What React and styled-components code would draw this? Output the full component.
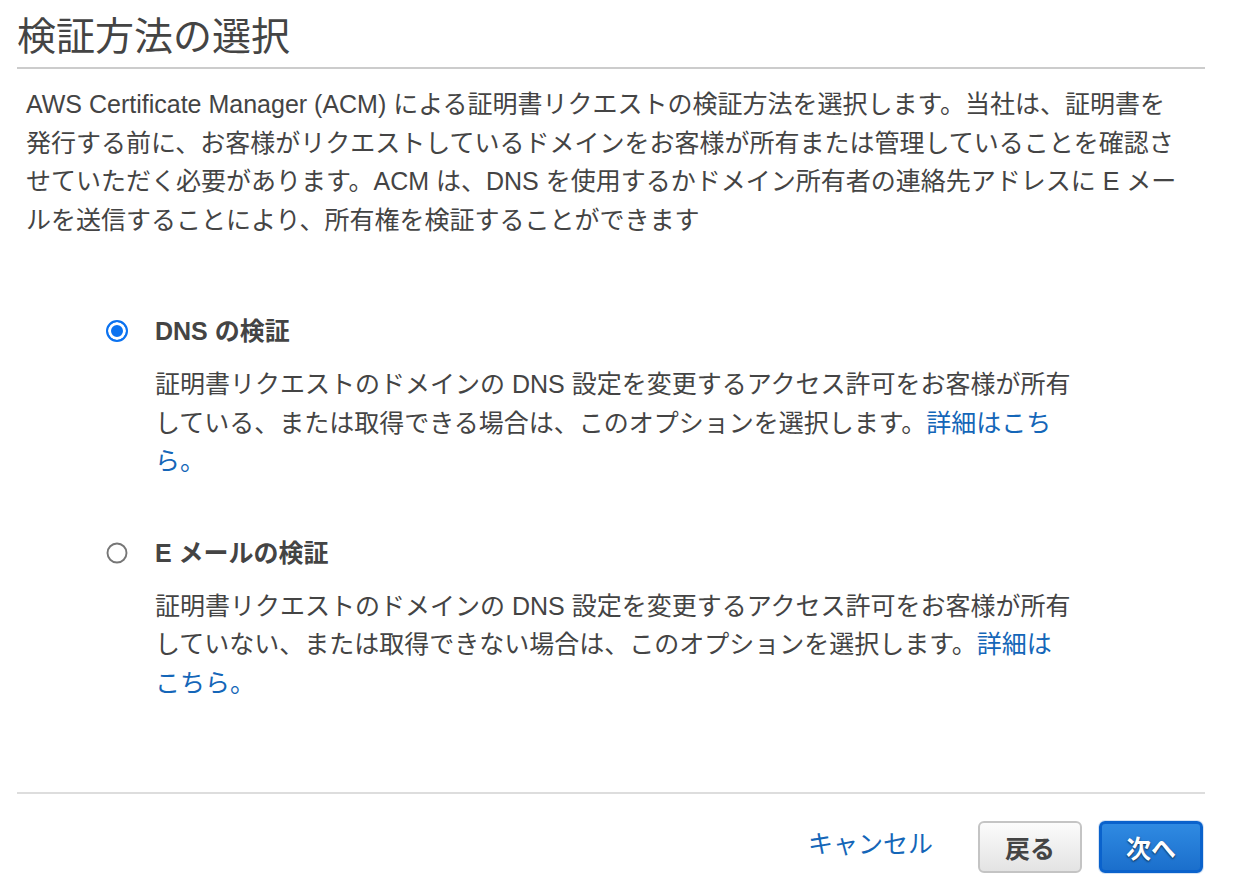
import styled, { createGlobalStyle } from "styled-components";

const GlobalStyle = createGlobalStyle`
	html, body {
		margin: 0;
		padding: 0;
		background: #ffffff;
	}
	body {
		font-family: "Liberation Sans", "Noto Sans CJK JP", sans-serif;
		color: #444444;
	}
`;

const Page = styled.div`
	width: 1238px;
	height: 890px;
	box-sizing: border-box;
	padding: 12px 33px 0 17px;
	overflow: hidden;
`;
const Header = styled.div`
	border-bottom: 2px solid #cccccc;
	padding-bottom: 5px;
`;
const Title = styled.h1`
	margin: 0;
	font-size: 39px;
	line-height: 50px;
	font-weight: 400;
	color: #444444;
`;
const Intro = styled.p`
	margin: 16px 0 0 0;
	padding: 0 19px 0 9px;
	font-size: 25px;
	line-height: 38.5px;
`;
const OptionList = styled.div`
	margin-top: 73px;
	padding-left: 89px;
	display: flex;
	flex-direction: column;
	gap: 53px;
`;
const Option = styled.label`
	display: grid;
	grid-template-columns: 22px 1fr;
	column-gap: 27px;
	align-items: center;
	cursor: pointer;
`;
const Radio = styled.input.attrs({ type: "radio" })`
	appearance: none;
	margin: 0;
	width: 22px;
	height: 22px;
	border-radius: 50%;
	box-sizing: border-box;
	border: 2px solid ${(p) => (p.checked ? "#0b72f0" : "#767676")};
	background: ${(p) => (p.checked ? "#0b72f0" : "#ffffff")};
	box-shadow: ${(p) => (p.checked ? "inset 0 0 0 3px #ffffff" : "none")};
	${(p) => !p.checked && "transform: scale(0.95);"}
`;
const OptionTitle = styled.span`
	font-size: 25px;
	line-height: 38px;
	font-weight: 700;
	color: #444444;
`;
const OptionText = styled.p`
	grid-column: 2;
	margin: 15px 0 0 0;
	max-width: 920px;
	font-size: 25px;
	line-height: 38.5px;
	font-weight: 400;
`;
const Link = styled.a`
	color: #1466b8;
	text-decoration: none;
`;
const Footer = styled.div`
	margin-top: 90px;
	border-top: 2px solid #dddddd;
	padding: 27px 2px 0 0;
	display: flex;
	justify-content: flex-end;
	align-items: center;
`;
const CancelLink = styled(Link)`
	font-size: 25px;
	line-height: 30px;
	padding-bottom: 6px;
	margin-right: 45px;
`;
const Button = styled.button`
	width: 104px;
	height: 52px;
	box-sizing: border-box;
	border-radius: 6px;
	font-family: inherit;
	font-size: 25px;
	font-weight: 700;
	cursor: pointer;
	margin-left: ${(p) => (p.$primary ? "17px" : "0")};
	border: ${(p) => (p.$primary ? "3px solid #0a62cc" : "2px solid #c4c4c4")};
	background: ${(p) =>
		p.$primary
			? "linear-gradient(#2f8ae2, #1b6fcc)"
			: "linear-gradient(#fbfbfb, #e3e3e3)"};
	color: ${(p) => (p.$primary ? "#ffffff" : "#444444")};
	text-shadow: ${(p) => (p.$primary ? "0 1px 2px rgba(0, 0, 0, 0.7)" : "none")};
	box-shadow: ${(p) => (p.$primary ? "0 0 0 1px #d6e4f5" : "none")};
`;

const App = () => {
	return (
		<Page>
			<GlobalStyle />
			<Header>
				<Title>検証方法の選択</Title>
			</Header>
			<Intro>
				AWS Certificate Manager (ACM)
				による証明書リクエストの検証方法を選択します。当社は、証明書を発行する前に、お客様がリクエストしているドメインをお客様が所有または管理していることを確認させていただく必要があります。ACM
				は、DNS を使用するかドメイン所有者の連絡先アドレスに E
				メールを送信することにより、所有権を検証することができます
			</Intro>
			<OptionList>
				<Option>
					<Radio name="method" checked readOnly />
					<OptionTitle>DNS の検証</OptionTitle>
					<OptionText>
						証明書リクエストのドメインの DNS
						設定を変更するアクセス許可をお客様が所有している、または取得できる場合は、このオプションを選択します。
						<Link href="#">詳細はこちら。</Link>
					</OptionText>
				</Option>
				<Option>
					<Radio name="method" checked={false} readOnly />
					<OptionTitle>E メールの検証</OptionTitle>
					<OptionText>
						証明書リクエストのドメインの DNS
						設定を変更するアクセス許可をお客様が所有していない、または取得できない場合は、このオプションを選択します。
						<Link href="#">詳細はこちら。</Link>
					</OptionText>
				</Option>
			</OptionList>
			<Footer>
				<CancelLink href="#">キャンセル</CancelLink>
				<Button>戻る</Button>
				<Button $primary>次へ</Button>
			</Footer>
		</Page>
	);
};

export default App;
